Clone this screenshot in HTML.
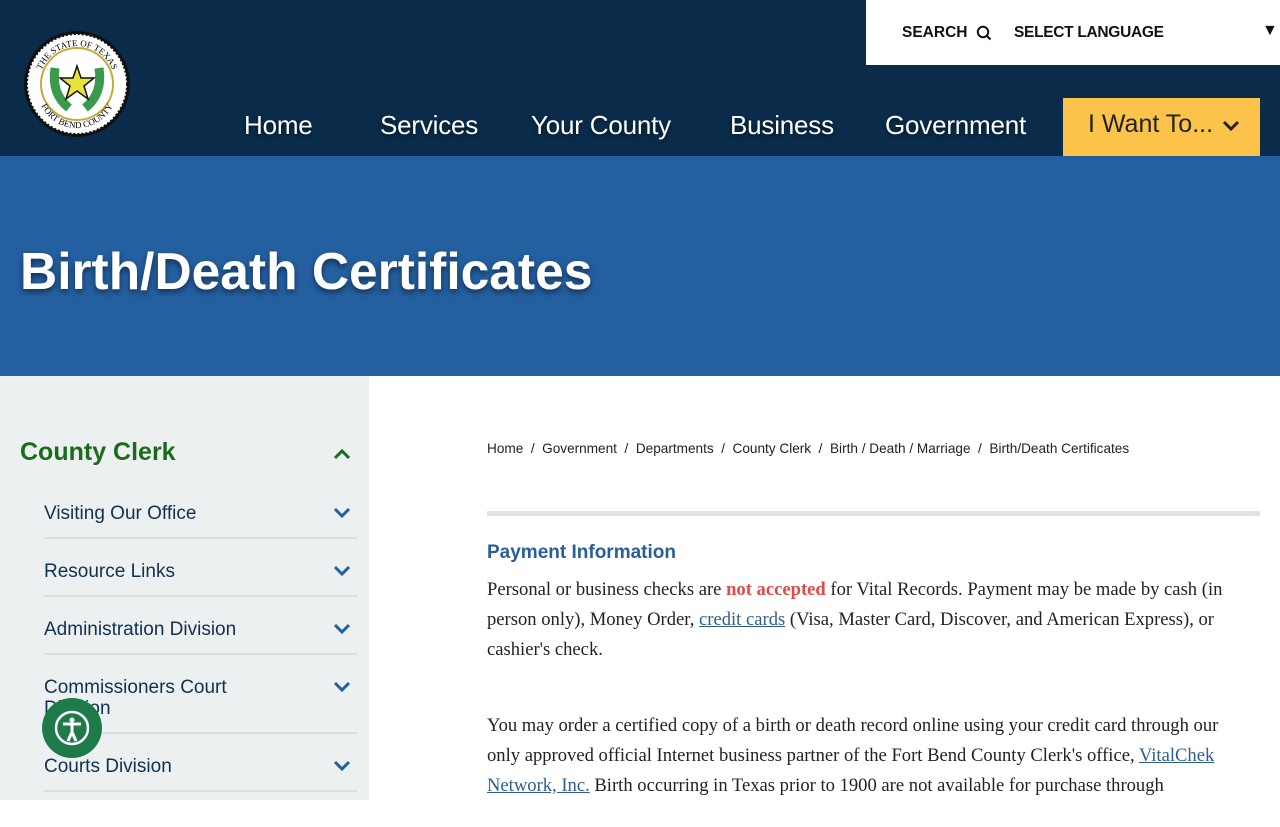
<!DOCTYPE html>
<html><head><meta charset="utf-8"><style>
*{margin:0;padding:0;box-sizing:border-box}
body{width:1280px;height:800px;overflow:hidden;background:#fff;font-family:"Liberation Sans",sans-serif;position:relative}
.hdr{position:absolute;left:0;top:0;width:1280px;height:156px;background:#0a2c4a}
.topbox{position:absolute;left:866px;top:0;width:414px;height:65px;background:#fff;font-weight:bold;font-size:15.5px;color:#111}
.nav a{position:absolute;top:110px;color:#fff;font-size:26px;text-decoration:none;text-shadow:0 2px 4px rgba(0,0,0,.5);letter-spacing:-0.2px}
.want{position:absolute;left:1063px;top:98px;width:197px;height:58px;background:#fcc34b;color:#222;font-size:25px;padding:12px 0 0 25px;white-space:nowrap}
.banner{position:absolute;left:0;top:156px;width:1280px;height:220px;background:#245fa0}
.banner h1{position:absolute;left:20px;top:85px;color:#fff;font-size:51.5px;font-weight:bold;text-shadow:0 3px 6px rgba(0,0,0,.5)}
.side{position:absolute;left:0;top:376px;width:369px;height:424px;background:#ecf0f1}
.side .t{position:absolute;left:20px;top:62px;font-size:25px;font-weight:bold;color:#1b6b1b}
.it{position:absolute;left:44px;width:313px;font-size:19px;color:#12314f;border-bottom:2px solid #d9dfe1;padding-top:3px}
.main{position:absolute;left:487px;top:376px;width:773px}
.bc{position:absolute;top:65px;font-size:13.6px;color:#222;white-space:nowrap}
.rule{position:absolute;top:135px;left:0;width:773px;height:5px;background:#dde3e5}
.h2{position:absolute;top:166px;font-size:19px;font-weight:bold;color:#2a5e9a}
.p{position:absolute;left:0;width:773px;font-family:"Liberation Serif",serif;font-size:18.6px;line-height:30px;color:#222}
.p a{color:#2e5f8e}
.red{color:#e04a4a;font-weight:bold}
</style></head><body>
<div class="hdr">
 <svg style="position:absolute;left:23px;top:30px" width="108" height="108" viewBox="0 0 108 108">
  <circle cx="54" cy="54" r="53" fill="#111"/><circle cx="54" cy="54" r="50" fill="#fff" stroke="#111" stroke-width="2" stroke-dasharray="2 2"/>
  <circle cx="54" cy="54" r="36" fill="#fff" stroke="#c9a93a" stroke-width="2"/>
  <path d="M32 38 Q28 64 46 78 M76 38 Q80 64 62 78" stroke="#3a9a4a" stroke-width="9" fill="none"/>
  <polygon points="54,36 58,48 71,48 61,56 65,69 54,61 43,69 47,56 37,48 50,48" fill="#e8e23a" stroke="#111" stroke-width="1.5"/>
  <path id="ta" d="M16 54 A38 38 0 0 1 92 54" fill="none"/>
  <path id="tb" d="M14 58 A40 40 0 0 0 94 58" fill="none"/>
  <text font-size="9" font-family="Liberation Serif"><textPath href="#ta" startOffset="50%" text-anchor="middle">THE STATE OF TEXAS</textPath></text>
  <text font-size="9" font-family="Liberation Serif"><textPath href="#tb" startOffset="50%" text-anchor="middle">FORT BEND COUNTY</textPath></text>
 </svg>
 <div class="topbox"><span style="position:absolute;left:36px;top:24px">SEARCH</span>
  <svg style="position:absolute;left:110px;top:25px" width="16" height="16" viewBox="0 0 16 16"><circle cx="7" cy="7" r="5.2" fill="none" stroke="#111" stroke-width="2"/><path d="M11 11l3.5 3.5" stroke="#111" stroke-width="2"/></svg>
  <span style="position:absolute;left:148px;top:24px;letter-spacing:-0.3px">SELECT LANGUAGE</span>
  <span style="position:absolute;left:396px;top:22px;font-size:16px">▼</span></div>
 <div class="nav"><a style="left:244px">Home</a><a style="left:380px">Services</a><a style="left:531px">Your County</a><a style="left:730px">Business</a><a style="left:885px">Government</a></div>
 <div class="want">I Want To... <svg width="18" height="12" viewBox="0 0 18 12" style="margin-left:2px"><path d="M2 2l7 7 7-7" stroke="#222" stroke-width="3" fill="none"/></svg></div>
</div>
<div class="banner"><h1>Birth/Death Certificates</h1></div>
<div class="side">
 <div class="t">County Clerk</div>
 <svg style="position:absolute;left:333px;top:72px" width="18" height="12" viewBox="0 0 18 12"><path d="M2 10l7-7 7 7" stroke="#1b6b1b" stroke-width="3" fill="none"/></svg>
 <div class="it" style="top:124px;height:39px">Visiting Our Office</div>
 <div class="it" style="top:182px;height:39px">Resource Links</div>
 <div class="it" style="top:240px;height:39px">Administration Division</div>
 <div class="it" style="top:298px;height:60px;line-height:21px">Commissioners Court<br>Division</div>
 <div class="it" style="top:377px;height:39px">Courts Division</div>
 <svg style="position:absolute;left:333px;top:131px" width="18" height="320" viewBox="0 0 18 320"><g stroke="#245fa0" stroke-width="3" fill="none"><path d="M2 2l7 7 7-7"/><path d="M2 60l7 7 7-7"/><path d="M2 118l7 7 7-7"/><path d="M2 176l7 7 7-7"/><path d="M2 255l7 7 7-7"/></g></svg>
 <svg style="position:absolute;left:42px;top:322px" width="60" height="60" viewBox="0 0 60 60"><circle cx="30" cy="30" r="30" fill="#1f7a4a"/><circle cx="30" cy="30" r="16" fill="none" stroke="#fff" stroke-width="2.5"/><circle cx="30" cy="22" r="2.5" fill="#fff"/><path d="M21 26h18M30 26v8l-4 9M30 34l4 9" stroke="#fff" stroke-width="3" fill="none"/></svg>
</div>
<div class="main">
 <div class="bc">Home &nbsp;/&nbsp; Government &nbsp;/&nbsp; Departments &nbsp;/&nbsp; County Clerk &nbsp;/&nbsp; Birth / Death / Marriage &nbsp;/&nbsp; Birth/Death Certificates</div>
 <div class="rule"></div>
 <div class="h2">Payment Information</div>
 <div class="p" style="top:199px">Personal or business checks are <span class="red">not accepted</span> for Vital Records. Payment may be made by cash (in person only), Money Order, <a href="#">credit cards</a> (Visa, Master Card, Discover, and American Express), or cashier's check.</div>
 <div class="p" style="top:335px;width:768px">You may order a certified copy of a birth or death record online using your credit card through our only approved official Internet business partner of the Fort Bend County Clerk's office, <a href="#">VitalChek Network, Inc.</a> Birth occurring in Texas prior to 1900 are not available for purchase through</div>
</div>
</body></html>
